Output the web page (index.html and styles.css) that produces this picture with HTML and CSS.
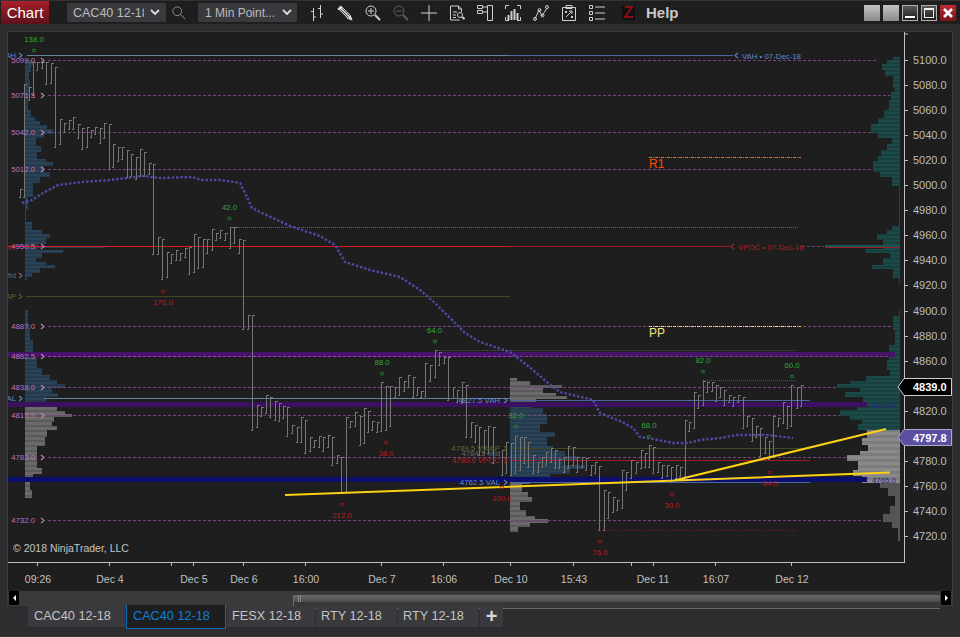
FILE: index.html
```html
<!DOCTYPE html>
<html lang="en">
<head>
<meta charset="utf-8">
<title>Chart</title>
<link rel="stylesheet" href="styles.css">
</head>
<body>
<div class="window">
  <header class="titlebar">
    <div class="app-tab">Chart</div>
    <div class="combo combo-first"><span class="combo-text">CAC40 12-18</span>
      <svg class="chev" viewBox="0 0 10 7"><path d="M1 1l4 4 4-4"/></svg></div>
    <svg class="icon search" viewBox="0 0 16 16"><circle cx="6" cy="6" r="5"/><path d="M9.7 9.7L15 15"/></svg>
    <div class="combo combo-second"><span class="combo-text">1 Min Point...</span>
      <svg class="chev" viewBox="0 0 10 7"><path d="M1 1l4 4 4-4"/></svg></div>
    <div class="tools">
      <svg class="icon" viewBox="0 0 16 16"><path d="M4.5 3v13M2 6.5h2.5M4.5 12h2.500M11.500 0v13M9 3.500h2.500M11.500 9h2.500"/></svg>
      <svg class="icon" viewBox="0 0 17 17"><path class="solid" d="M1 4L4 1 14 11l2 5-5-2z"/><path class="hatch" d="M3.500 4.500l9 9M5.500 3.500l8 8M2.500 5.500l8 8"/></svg>
      <svg class="icon" viewBox="0 0 16 16"><circle cx="6" cy="6" r="5"/><path d="M3 6h6M6 3v6"/><path class="thick" d="M10 10l5 5"/></svg>
      <svg class="icon dim" viewBox="0 0 16 16"><circle cx="6" cy="6" r="5"/><path d="M3 6h6"/><path class="thick" d="M10 10l5 5"/></svg>
      <svg class="icon" viewBox="0 0 16 16"><path d="M8 0v16M0 8h16"/></svg>
      <svg class="icon" viewBox="0 0 16 16"><path d="M12.500 7V4L9.500 1h-8v14h9M9.500 1v3h3M4 7h4M4 10h3M4 12.500h3"/><circle cx="11" cy="10" r="2.500"/><path class="thick" d="M13 12l2.500 2"/></svg>
      <svg class="icon" viewBox="0 0 16 16"><path d="M10.500 .5h5v15h-5zM.5 .5h5v3h-5zM.5 5.500h5v3h-5zM5.500 2h5M5.500 7h5"/></svg>
      <svg class="icon" viewBox="0 0 16 16"><path d="M4 .5H.5V4M12 .5h3.500V4M4 15.500H.5V12M12 15.500h3.500V12"/><path class="thick" d="M3.500 15V10M6.500 15V6M9.500 15V4M12.500 15V8"/></svg>
      <svg class="icon" viewBox="0 0 16 16"><path d="M2 14L6 5l3 6 5-8"/><circle cx="2" cy="14" r="1.500"/><circle cx="6.500" cy="5" r="1.500"/><circle cx="9.500" cy="10.500" r="1.500"/><circle cx="14" cy="2" r="1.500"/></svg>
      <svg class="icon" viewBox="0 0 16 16"><path d="M1.500 2.500h13v13h-13zM5 .5h6v3H5zM4 6l2 2M6 6L4 8M10 11l2 2M12 11l-2 2M5 12l6-6M8 6h3v3"/></svg>
      <svg class="icon" viewBox="0 0 16 16"><path d="M.5 .5h3v3h-3zM.5 6.500h3v3h-3zM.5 12.500h3v3h-3zM6 2h10M6 8h10M6 14h10"/></svg>
    </div>
    <div class="zlogo">Z</div>
    <div class="help">Help</div>
    <div class="win-buttons">
      <div class="win-btn plain"></div>
      <div class="win-btn plain"></div>
      <div class="win-btn dark"><span class="min-bar"></span></div>
      <div class="win-btn dark"><span class="max-box"></span></div>
      <div class="win-btn close"><svg viewBox="0 0 16 16"><path d="M4 4l8 8M12 4l-8 8"/></svg></div>
    </div>
  </header>

  <main class="chart-panel">
    <svg class="chart" width="944" height="559" viewBox="8 32 944 559">
      <defs>
        <pattern id="stripe-blue" width="3" height="4" patternUnits="userSpaceOnUse"><rect class="st-blue-a" width="3" height="4"/><rect class="st-blue-b" width="3" height="2"/></pattern>
        <pattern id="stripe-teal" width="3" height="4" patternUnits="userSpaceOnUse"><rect class="st-teal-a" width="3" height="4"/><rect class="st-teal-b" width="3" height="2"/></pattern>
        <pattern id="stripe-gray" width="3" height="5" patternUnits="userSpaceOnUse"><rect class="st-gray-a" width="3" height="5"/><rect class="st-gray-b" width="3" height="2"/></pattern>
        <pattern id="stripe-light" width="3" height="6" patternUnits="userSpaceOnUse"><rect class="st-light-a" width="3" height="6"/><rect class="st-light-b" width="3" height="3"/></pattern>
      </defs>
      <!-- volume profiles -->
      <polygon fill="url(#stripe-blue)" points="25,60 33,60 33,66 31,66 31,72 29,72 29,80 30,80 30,97 28,97 28,110 31,110 31,117 35,117 35,121 40,121 40,125 47,125 47,129 53,129 53,134 44,134 44,138 36,138 36,146 41,146 41,152 37,152 37,159 46,159 46,162 53,162 53,166 44,166 44,172 50,172 50,177 40,177 40,183 33,183 33,197 28,197 28,210 26,210 26,222 32,222 32,230 42,230 42,234 50,234 50,238 46,238 46,244 38,244 38,246 105,246 105,248 38,248 38,250 63,250 63,253 42,253 42,258 36,258 36,262 46,262 46,265 55,265 55,268 40,268 40,273 32,273 32,277 27,277 27,280 25,280"/>
      <polygon fill="url(#stripe-blue)" points="25,310 28,310 28,325 30,325 30,340 33,340 33,357 37,357 37,368 42,368 42,375 50,375 50,380 57,380 57,384 65,384 65,388 52,388 52,393 58,393 58,397 46,397 46,402 25,402"/>
      <polygon fill="url(#stripe-gray)" points="25,402 45,402 45,406 57,406 57,411 65,411 65,414 72,414 72,417 54,417 54,422 52,422 52,426 57,426 57,430 47,430 47,437 45,437 45,446 37,446 37,468 42,468 42,474 33,474 33,482 30,482 30,490 32,490 32,498 25,498"/>
      <polygon fill="url(#stripe-gray)" points="510,378 517,378 517,381 530,381 530,385 562,385 562,388 543,388 543,393 556,393 556,396 567,396 567,399 536,399 536,402 510,402"/>
      <polygon fill="url(#stripe-blue)" points="510,402 532,402 532,408 543,408 543,414 547,414 547,424 540,424 540,432 555,432 555,437 547,437 547,446 553,446 553,451 565,451 565,456 578,456 578,460 563,460 563,465 585,465 585,469 570,469 570,474 550,474 550,478 510,478"/>
      <polygon fill="url(#stripe-gray)" points="510,478 530,478 530,484 522,484 522,492 528,492 528,497 532,497 532,502 520,502 520,510 526,510 526,516 535,516 535,519 548,519 548,523 530,523 530,527 518,527 518,532 510,532"/>
      <polygon fill="url(#stripe-teal)" points="900,57 893,57 893,60 887,60 887,64 882,64 882,70 885,70 885,76 893,76 893,88 895,88 895,92 891,92 891,100 889,100 889,110 884,110 884,118 878,118 878,124 871,124 871,133 878,133 878,138 892,138 892,144 887,144 887,150 881,150 881,156 878,156 878,161 873,161 873,172 880,172 880,177 892,177 892,186 899,186 899,226 892,226 892,230 887,230 887,234 877,234 877,240 883,240 883,245 825,245 825,247 883,247 883,249 865,249 865,253 890,253 890,258 883,258 883,265 872,265 872,269 893,269 893,278 899,278 899,284 900,284"/>
      <polygon fill="url(#stripe-teal)" points="900,310 899,310 899,316 893,316 893,330 895,330 895,345 889,345 889,360 887,360 887,370 890,370 890,376 866,376 866,381 850,381 850,384 837,384 837,388 860,388 860,392 845,392 845,397 863,397 863,404 857,404 857,410 840,410 840,416 850,416 850,420 862,420 862,424 858,424 858,430 900,430"/>
      <polygon fill="url(#stripe-light)" points="860,430 867,430 867,438 862,438 862,445 868,445 868,451 860,451 860,455 847,455 847,461 858,461 858,470 853,470 853,476 862,476 862,483 900,483 900,430"/>
      <polygon class="vp-graydark" points="868,483 880,483 880,488 888,488 888,496 895,496 895,506 890,506 890,514 883,514 883,522 892,522 892,528 898,528 898,541 900,541 900,483"/>

      <!-- bands -->
      <rect class="band-a" x="8" y="352" width="887" height="5"/>
      <rect class="band-b" x="8" y="402" width="859" height="5"/>
      <rect class="band-c" x="8" y="477" width="859" height="5"/>

      <!-- level lines -->
      <path class="dash" d="M48 60.500H876M48 95.500H890M48 132.500H872M48 169.500H873M48 326.500H893M48 387.500H837M48 415.500H840M48 457.500H847M48 520.500H883M802 246.500H824"/>
      <path class="dash-bright" d="M48 356.500H510"/>
      <path class="dash" d="M510 356.500H890"/>
      <path class="line-vah" d="M27 55.500H510M44 398.500H510"/>
      <path class="line-vah-dark" d="M510 55.500H733M511 400.500H810M511 482.500H810"/>
      <path class="line-red" d="M8 246.500H510"/>
      <path class="line-red-dark" d="M510 246.500H730M511 460.500H810M825 247.500H900"/>
      <path class="line-olive" d="M26 296.500H510M511 448.500H810"/>
      <path class="line-teal" d="M825 246H900"/>
      <path class="dot-r1" d="M649 157.500H801"/>
      <path class="dot-pp" d="M649 326.500H801"/>
      <path class="dot-green" d="M435 350.500H797M703 380.500H797"/>
      <path class="dot-gray" d="M233 227.500H798"/>
      <path class="dot-red" d="M600 530.500H798"/>

      <!-- price bars -->
      <g class="bars-wrap">
      <path class="bars" d="M22 189h-2V197h-2M26 84h-2V197h-2M31 87h-2V100h-2M35 62h-2V95h-2M39 62h-2V70h-2M44 62h-2V68h-2M48 62h-2V84h-2M53 63h-2V83h-2M57 67h-2V147h-2M62 119h-2V144h-2M66 123h-2V132h-2M71 120h-2V129h-2M75 117h-2V129h-2M80 124h-2V138h-2M84 128h-2V149h-2M89 127h-2V147h-2M93 130h-2V137h-2M97 127h-2V134h-2M102 128h-2V143h-2M106 123h-2V138h-2M111 124h-2V169h-2M115 144h-2V167h-2M120 147h-2V161h-2M124 147h-2V159h-2M129 150h-2V177h-2M133 154h-2V176h-2M138 157h-2V179h-2M142 149h-2V176h-2M146 152h-2V176h-2M151 163h-2V174h-2M155 164h-2V254h-2M160 237h-2V254h-2M164 239h-2V279h-2M169 252h-2V277h-2M173 254h-2V263h-2M178 250h-2V260h-2M182 253h-2V260h-2M187 248h-2V257h-2M191 247h-2V274h-2M196 234h-2V272h-2M200 237h-2V268h-2M205 239h-2V267h-2M209 239h-2V253h-2M214 229h-2V250h-2M218 233h-2V240h-2M222 230h-2V238h-2M227 233h-2V240h-2M232 227h-2V248h-2M236 227h-2V243h-2M241 239h-2V253h-2M245 240h-2V329h-2M250 315h-2V329h-2M254 315h-2V430h-2M259 405h-2V427h-2M263 407h-2V416h-2M268 395h-2V413h-2M272 397h-2V417h-2M277 401h-2V420h-2M281 403h-2V421h-2M285 406h-2V418h-2M289 407h-2V436h-2M294 425h-2V433h-2M299 427h-2V442h-2M303 417h-2V442h-2M307 420h-2V453h-2M312 437h-2V451h-2M316 440h-2V447h-2M321 436h-2V447h-2M325 437h-2V451h-2M330 435h-2V447h-2M334 437h-2V465h-2M339 455h-2V463h-2M343 457h-2V492h-2M348 417h-2V492h-2M352 421h-2V427h-2M357 412h-2V426h-2M362 416h-2V445h-2M366 408h-2V443h-2M370 411h-2V432h-2M374 421h-2V430h-2M379 422h-2V432h-2M383 382h-2V431h-2M388 386h-2V430h-2M392 386h-2V426h-2M397 387h-2V397h-2M401 377h-2V395h-2M406 381h-2V391h-2M410 375h-2V387h-2M415 377h-2V397h-2M419 387h-2V395h-2M423 391h-2V397h-2M427 363h-2V396h-2M432 365h-2V381h-2M437 350h-2V377h-2M441 352h-2V365h-2M446 357h-2V363h-2M450 357h-2V400h-2M455 387h-2V398h-2M459 390h-2V402h-2M464 382h-2V403h-2M468 385h-2V437h-2M473 422h-2V437h-2M477 425h-2V442h-2M481 427h-2V455h-2M486 430h-2V453h-2M490 426h-2V453h-2M495 427h-2V463h-2M504 450h-2V475h-2M508 442h-2V473h-2M513 443h-2V475h-2M517 436h-2V473h-2M522 437h-2V470h-2M526 437h-2V463h-2M530 442h-2V467h-2M535 455h-2V473h-2M540 462h-2V472h-2M544 457h-2V467h-2M548 452h-2V465h-2M553 448h-2V462h-2M557 450h-2V468h-2M561 459h-2V468h-2M566 457h-2V472h-2M570 446h-2V468h-2M575 447h-2V465h-2M579 457h-2V472h-2M584 457h-2V467h-2M588 458h-2V470h-2M593 465h-2V475h-2M597 462h-2V473h-2M601 466h-2V530h-2M606 490h-2V530h-2M610 492h-2V518h-2M615 497h-2V512h-2M619 500h-2V510h-2M624 470h-2V508h-2M628 472h-2V490h-2M633 460h-2V478h-2M638 462h-2V473h-2M643 450h-2V468h-2M647 453h-2V467h-2M651 445h-2V467h-2M655 447h-2V473h-2M660 462h-2V472h-2M664 465h-2V478h-2M669 465h-2V476h-2M673 467h-2V482h-2M678 465h-2V478h-2M682 467h-2V476h-2M687 420h-2V476h-2M691 422h-2V431h-2M696 392h-2V428h-2M700 395h-2V408h-2M705 381h-2V405h-2M709 382h-2V392h-2M714 382h-2V391h-2M718 385h-2V401h-2M722 387h-2V397h-2M726 390h-2V405h-2M731 395h-2V402h-2M735 397h-2V406h-2M740 395h-2V402h-2M745 397h-2V428h-2M749 416h-2V426h-2M754 418h-2V441h-2M758 426h-2V437h-2M762 428h-2V456h-2M767 437h-2V453h-2M771 441h-2V459h-2M775 416h-2V457h-2M780 418h-2V426h-2M785 402h-2V423h-2M789 406h-2V428h-2M793 385h-2V426h-2M799 387h-2V408h-2M803 385h-2V406h-2"/>
      </g>

      <!-- VWAP dots -->
      <polyline class="vwap" points="22,203 32,200 43,193 58,185 83,182 110,180 143,176 160,178 193,177 200,180 220,180 240,183 246,195 252,208 262,213 290,226 320,236 335,245 345,262 370,270 400,277 420,290 435,303 450,318 465,333 480,342 510,352 533,370 548,383 560,392 593,400 600,413 622,422 633,428 640,437 653,439 673,443 688,443 700,440 720,438 737,435 767,435 793,438"/>

      <!-- trend lines -->
      <path class="trend" d="M285 495L890 472.500M672 481L886 429"/>

      <!-- swing markers -->
      <g class="marks-green">
        <ellipse cx="34" cy="50.500" rx="1.700" ry="1.300"/><ellipse cx="229.500" cy="218.500" rx="1.700" ry="1.300"/>
        <ellipse cx="435" cy="341.500" rx="1.700" ry="1.300"/><ellipse cx="382" cy="373.500" rx="1.700" ry="1.300"/>
        <ellipse cx="703" cy="371.500" rx="1.700" ry="1.300"/><ellipse cx="792" cy="376.500" rx="1.700" ry="1.300"/>
        <ellipse cx="649" cy="436.500" rx="1.700" ry="1.300"/><ellipse cx="516" cy="426.500" rx="1.700" ry="1.300"/>
      </g>
      <g class="marks-red">
        <ellipse cx="163" cy="291.500" rx="1.700" ry="1.300"/><ellipse cx="386" cy="442.500" rx="1.700" ry="1.300"/>
        <ellipse cx="342" cy="504.500" rx="1.700" ry="1.300"/><ellipse cx="502" cy="487.500" rx="1.700" ry="1.300"/>
        <ellipse cx="672" cy="494.500" rx="1.700" ry="1.300"/><ellipse cx="770" cy="472.500" rx="1.700" ry="1.300"/>
        <ellipse cx="600" cy="541.500" rx="1.700" ry="1.300"/>
      </g>
      <g class="t-small t-green" text-anchor="middle">
        <text x="34" y="42">138.0</text><text x="229.500" y="210">42.0</text><text x="434.500" y="333">64.0</text>
        <text x="382" y="365">88.0</text><text x="703" y="363">82.0</text><text x="792" y="368">60.0</text>
        <text x="649" y="428">68.0</text><text x="516" y="418">32.0</text>
      </g>
      <g class="t-small t-red" text-anchor="middle">
        <text x="163" y="305">176.0</text><text x="386" y="456">38.0</text><text x="342" y="518">212.0</text>
        <text x="502" y="501">100.0</text><text x="672" y="508">30.0</text><text x="770" y="486">64.0</text><text x="600" y="555">76.0</text>
      </g>

      <!-- left level labels -->
      <g class="t-small t-pink" text-anchor="end">
        <text x="35" y="63">5099.0</text><text x="35" y="98">5071.5</text><text x="35" y="135">5042.0</text>
        <text x="35" y="172">5012.0</text><text x="35" y="249">4950.5</text><text x="35" y="329">4887.0</text>
        <text x="35" y="358.500">4862.5</text><text x="35" y="390">4838.0</text><text x="35" y="418">4815.5</text>
        <text x="35" y="460">4782.0</text><text x="35" y="523">4732.0</text>
      </g>
      <path class="chev-pink" d="M41 58l3 2.500-3 2.500M41 93l3 2.500-3 2.500M41 130l3 2.500-3 2.500M41 167l3 2.500-3 2.500M41 244l3 2.500-3 2.500M41 324l3 2.500-3 2.500M41 354l3 2.500-3 2.500M41 385l3 2.500-3 2.500M41 413l3 2.500-3 2.500M41 455l3 2.500-3 2.500M41 518l3 2.500-3 2.500"/>
      <text class="t-small t-blue" x="16" y="58" text-anchor="end">VAH</text>
      <text class="t-small t-blue" x="16" y="401" text-anchor="end">VAL</text>
      <text class="t-small t-mid" x="16" y="278" text-anchor="end">Mid</text>
      <text class="t-small t-olive" x="16" y="299" text-anchor="end">VWAP</text>
      <text class="t-small t-red" x="14" y="249.500" text-anchor="end">VPOC</text>
      <path class="chev-blue" d="M19 53l3 2.500-3 2.500M19 396l3 2.500-3 2.500"/>
      <path class="chev-mid" d="M19 273l3 2.500-3 2.500"/>
      <path class="chev-olive" d="M19 294l3 2.500-3 2.500"/>

      <!-- session labels -->
      <g class="t-small" text-anchor="end">
        <text class="t-olive" x="500" y="451">4789.5 VWAP</text>
        <text class="t-mid" x="500" y="456">4784.5 Mid</text>
        <text class="t-red" x="500" y="463">4780.0 VPOC</text>
        <text class="t-blue" x="500" y="403">4827.5 VAH</text>
        <text class="t-blue" x="500" y="485">4762.5 VAL</text>
      </g>
      <path class="chev-blue" d="M504 398l3 2.500-3 2.500M504 480l3 2.500-3 2.500"/>
      <path class="chev-red" d="M504 458l3 2.500-3 2.500"/>
      <path class="chev-olive" d="M504 446l3 2.500-3 2.500"/>
      <path class="chev-blue" d="M738 53l-3 2.500 3 2.500"/>
      <text class="t-small t-blue" x="742" y="58.500">VAH • 07-Dec-18</text>
      <path class="chev-red" d="M734 244l-3 2.500 3 2.500"/>
      <text class="t-small t-red" x="738" y="249.500">VPOC • 07-Dec-18</text>
      <text class="t-small t-deep" x="872" y="407.500">4825.0</text>
      <text class="t-small t-deep" x="872" y="482.500">4765.0</text>
      <text class="t-pivot t-r1" x="649" y="168">R1</text>
      <text class="t-pivot t-pp" x="649" y="337">PP</text>
      <text class="t-copy" x="13" y="552">© 2018 NinjaTrader, LLC</text>

      <!-- price axis -->
      <path class="axis" d="M904.500 32V562M8 562.500H905"/>
      <path class="axis" d="M904 34h4M904 60.500h4M904 85.500h4M904 110.500h4M904 135.500h4M904 160.500h4M904 185.500h4M904 210.500h4M904 235.500h4M904 260.500h4M904 285.500h4M904 311.500h4M904 336.500h4M904 361.500h4M904 386.500h4M904 411.500h4M904 436.500h4M904 461.500h4M904 486.500h4M904 511.500h4M904 536.500h4"/>
      <g class="t-axis">
        <text x="913" y="64">5100.0</text><text x="913" y="89">5080.0</text><text x="913" y="114">5060.0</text>
        <text x="913" y="139">5040.0</text><text x="913" y="164">5020.0</text><text x="913" y="189">5000.0</text>
        <text x="913" y="214">4980.0</text><text x="913" y="239">4960.0</text><text x="913" y="264">4940.0</text>
        <text x="913" y="289">4920.0</text><text x="913" y="315">4900.0</text><text x="913" y="340">4880.0</text>
        <text x="913" y="365">4860.0</text><text x="913" y="415">4820.0</text><text x="913" y="465">4780.0</text>
        <text x="913" y="490">4760.0</text><text x="913" y="515">4740.0</text><text x="913" y="540">4720.0</text>
      </g>
      <polygon class="tag-last" points="898,387 904,378.500 951.500,378.500 951.500,395.500 904,395.500"/>
      <text class="t-tag" x="913" y="391">4839.0</text>
      <polygon class="tag-vwap" points="898,437.500 904,429.500 951.500,429.500 951.500,445.500 904,445.500"/>
      <text class="t-tag" x="913" y="441.500">4797.8</text>

      <!-- time axis -->
      <path class="axis" d="M37.500 562v4M109.500 562v4M171.500 562v4M193.500 562v4M243.500 562v4M305.500 562v4M381.500 562v4M443.500 562v4M510.500 562v4M573.500 562v4M631.500 562v4M653.500 562v4M715.500 562v4M791.500 562v4"/>
      <g class="t-time" text-anchor="middle">
        <text x="38" y="583">09:26</text><text x="110" y="583">Dec 4</text><text x="194" y="583">Dec 5</text>
        <text x="244" y="583">Dec 6</text><text x="306" y="583">16:00</text><text x="382" y="583">Dec 7</text>
        <text x="444" y="583">16:06</text><text x="511" y="583">Dec 10</text><text x="574" y="583">15:43</text>
        <text x="653" y="583">Dec 11</text><text x="716" y="583">16:07</text><text x="792" y="583">Dec 12</text>
      </g>
    </svg>
    <div class="scrollbar">
      <div class="scroll-btn"><span class="arrow-left"></span></div>
      <div class="scroll-track"><div class="scroll-thumb"><span class="grip"></span></div></div>
      <div class="scroll-btn"><span class="arrow-right"></span></div>
    </div>
  </main>

  <nav class="tabs">
    <div class="tab tab-w1">CAC40 12-18</div>
    <div class="tab tab-active">CAC40 12-18</div>
    <div class="tab tab-w3">FESX 12-18</div>
    <div class="tab tab-w4">RTY 12-18</div>
    <div class="tab tab-w4">RTY 12-18</div>
    <div class="tab tab-add">+</div>
  </nav>
</div>
</body>
</html>
```
FILE: styles.css
```css
* { box-sizing: border-box; }
html, body { margin: 0; padding: 0; }
body { background: #2d2d30; font-family: "Liberation Sans", Arial, sans-serif; }
.window { width: 960px; height: 637px; overflow: hidden; background: #2d2d30; border-bottom: 1px solid #3a3a3d; }

.titlebar { display: flex; align-items: center; height: 24px; background: #1e1e1e; border-top: 1px solid #333; padding-left: 1px; }
.app-tab { width: 48px; height: 23px; background: linear-gradient(#a81f2a, #5c1218); color: #fff; font-size: 15px; line-height: 23px; text-align: center; }
.combo { display: flex; align-items: center; width: 99px; height: 19px; background: #3a3a3e; color: #bcbcbc; font-size: 12.500px; padding-left: 6px; }
.combo-first { margin-left: 18px; }
.combo-second { margin-left: 12px; padding-left: 7px; font-size: 12px; }
.combo-text { width: 71px; overflow: hidden; white-space: nowrap; }
.combo-first .combo-text { width: 71px; }
.chev { width: 10px; height: 7px; margin-left: 6px; }
.combo-first .chev { margin-left: 6px; }
.chev path { fill: none; stroke: #ddd; stroke-width: 1.800; }
.icon { width: 16px; height: 16px; flex: none; }
.icon path, .icon circle { fill: none; stroke: #cfcfcf; stroke-width: 1; }
.icon .thick { stroke-width: 2; }
.icon .solid { fill: #e0e0e0; stroke: #e0e0e0; }
.icon .hatch { stroke: #333; }
.icon.dim path, .icon.dim circle { stroke: #5e5e5e; }
.icon.search { width: 14px; height: 14px; margin-left: 6px; }
.icon.search path, .icon.search circle { stroke: #999; }
.tools { display: flex; gap: 12px; margin-left: 12px; }
.zlogo { width: 13px; height: 14px; margin-left: 17px; background: #111; color: #8f0d12; font-size: 16px; font-weight: bold; line-height: 14px; text-align: center; }
.help { margin-left: 11px; color: #c8c8c8; font-size: 15px; font-weight: bold; }
.win-buttons { display: flex; gap: 3px; margin-left: auto; padding-right: 4px; }
.win-btn { position: relative; width: 16px; height: 16px; }
.win-btn.plain { background: linear-gradient(#c4c4c4, #8c8c8c); }
.win-btn.dark { background: linear-gradient(#585858, #1c1c1c); border: 1px solid #b0b0b0; }
.win-btn.close { background: linear-gradient(#c02a34, #7a1218); }
.win-btn.close svg { display: block; width: 16px; height: 16px; }
.win-btn.close path { stroke: #fff; stroke-width: 2.600; fill: none; }
.min-bar { position: absolute; left: 2px; right: 2px; bottom: 2px; height: 2px; background: #fff; }
.max-box { position: absolute; inset: 2px; border: 1px solid #eee; border-top-width: 2px; }

.chart-panel { width: 946px; height: 575px; margin: 7px 0 0 7px; border: 1px solid #3c3c3e; background: #1e1e1e; }
.chart { display: block; }
.scrollbar { display: flex; height: 14px; background: #3a3a3a; }
.scroll-btn { display: flex; align-items: center; justify-content: center; width: 10px; height: 14px; margin: 0 1px; background: #000; flex: none; }
.scroll-track { flex: 1; padding-left: 273px; }
.scroll-thumb { height: 14px; padding-left: 4px; border-left: 1px solid #707070; border-bottom: 1px solid #6a6a6a; background: linear-gradient(#6a6a6a 0, #4e4e4e 50%, #383838 52%, #363636); }
.grip { display: block; width: 3px; height: 7px; margin-top: 4px; border-left: 1px solid #888; border-right: 1px solid #888; }
.arrow-left { width: 0; height: 0; border: 3px solid transparent; border-left-width: 0; border-right-color: #fff; }
.arrow-right { width: 0; height: 0; border: 3px solid transparent; border-right-width: 0; border-left-color: #fff; }

.tabs { display: flex; align-items: flex-start; gap: 1px; margin-left: 28px; }
.tab { height: 21px; background: #3a3a3e; color: #c4c4c4; font-size: 12.700px; line-height: 21px; white-space: nowrap; padding-left: 6px; }
.tab-w1 { width: 97px; }
.tab-active { width: 100px; height: 24px; margin-top: -1px; background: #1e1e1e; border: 1px solid #0a6cb8; border-top: 0; color: #1080d8; line-height: 23px; padding-left: 6px; }
.tab-w3 { width: 88px; padding-left: 5px; }
.tab-w4 { width: 81px; padding-left: 5px; }
.tab-add { width: 23px; padding-left: 0; text-align: center; font-size: 20px; font-weight: bold; line-height: 20px; color: #d8d8d8; }

/* chart marks */
.st-blue-a { fill: #2b4356; }
.st-blue-b { fill: #253b4d; }
.st-teal-a { fill: #17403f; }
.st-teal-b { fill: #1b4a48; }
.st-gray-a { fill: #6a6a6a; }
.st-gray-b { fill: #5a5a5a; }
.st-light-a { fill: #7c7c7c; }
.st-light-b { fill: #8a8a8a; }
.vp-graydark { fill: #555; }
.band-a { fill: #451468; }
.band-b { fill: #3b1060; }
.band-c { fill: #0b0e6c; }
.dash, .dash-bright { fill: none; stroke: #75477c; stroke-dasharray: 3 2; }
.dash-bright { stroke: #a33bc8; }
.line-vah { fill: none; stroke: #64809f; }
.line-vah-dark { fill: none; stroke: #4a68a0; }
.line-red { fill: none; stroke: #dd1a1a; }
.line-red-dark { fill: none; stroke: #a01a20; }
.line-olive { fill: none; stroke: #3f4a1e; }
.line-teal { fill: none; stroke: #0e6a68; stroke-width: 1; }
.dot-r1 { fill: none; stroke: #f07030; stroke-dasharray: 3 1 1 1; }
.dot-pp { fill: none; stroke: #e8e060; stroke-dasharray: 3 1 1 1; }
.dot-green { fill: none; stroke: #1f7a2e; stroke-dasharray: 1 1; }
.dot-gray { fill: none; stroke: #58705c; stroke-dasharray: 1 1; }
.dot-red { fill: none; stroke: #8a1a1a; stroke-dasharray: 1 2; }
.bars-wrap { transform: translate(.5px, .5px); }
.bars { fill: none; stroke: #767676; stroke-width: 1; shape-rendering: crispEdges; }
.vwap { fill: none; stroke: #4f4aa8; stroke-width: 2.400; stroke-dasharray: 2.400 1.900; }
.trend { fill: none; stroke: #fcd116; stroke-width: 2; }
.marks-green ellipse { fill: none; stroke: #1f8a2e; stroke-width: 1; }
.marks-red ellipse { fill: none; stroke: #a01a1a; stroke-width: 1; }
.t-small { font-size: 7.800px; }
.t-green { fill: #32a834; }
.t-red { fill: #b81c20; }
.t-pink { fill: #c070c0; }
.t-blue { fill: #6288d0; }
.t-mid { fill: #666; }
.t-olive { fill: #5a6c2e; }
.t-deep { fill: #2a2490; }
.chev-pink, .chev-blue, .chev-red, .chev-mid, .chev-olive { fill: none; stroke-width: 1.200; }
.chev-pink { stroke: #c47ac4; }
.chev-blue { stroke: #5a7fc4; }
.chev-red { stroke: #b01a1f; }
.chev-mid { stroke: #6a6a6a; }
.chev-olive { stroke: #50602a; }
.t-pivot { font-size: 12px; }
.t-r1 { fill: #ff4a00; }
.t-pp { fill: #f0e880; }
.t-copy { font-size: 10.500px; fill: #c4c4c4; }
.axis { fill: none; stroke: #c0c0c0; stroke-width: 1; }
.t-axis { font-size: 11px; fill: #bcbcbc; }
.t-time { font-size: 10.500px; fill: #c0c0c0; }
.tag-last { fill: #000; stroke: #cfcfcf; stroke-width: 1; }
.tag-vwap { fill: #5a4fa0; stroke: #a8a8c8; stroke-width: 1; }
.t-tag { font-size: 11px; font-weight: bold; fill: #fff; }
```
